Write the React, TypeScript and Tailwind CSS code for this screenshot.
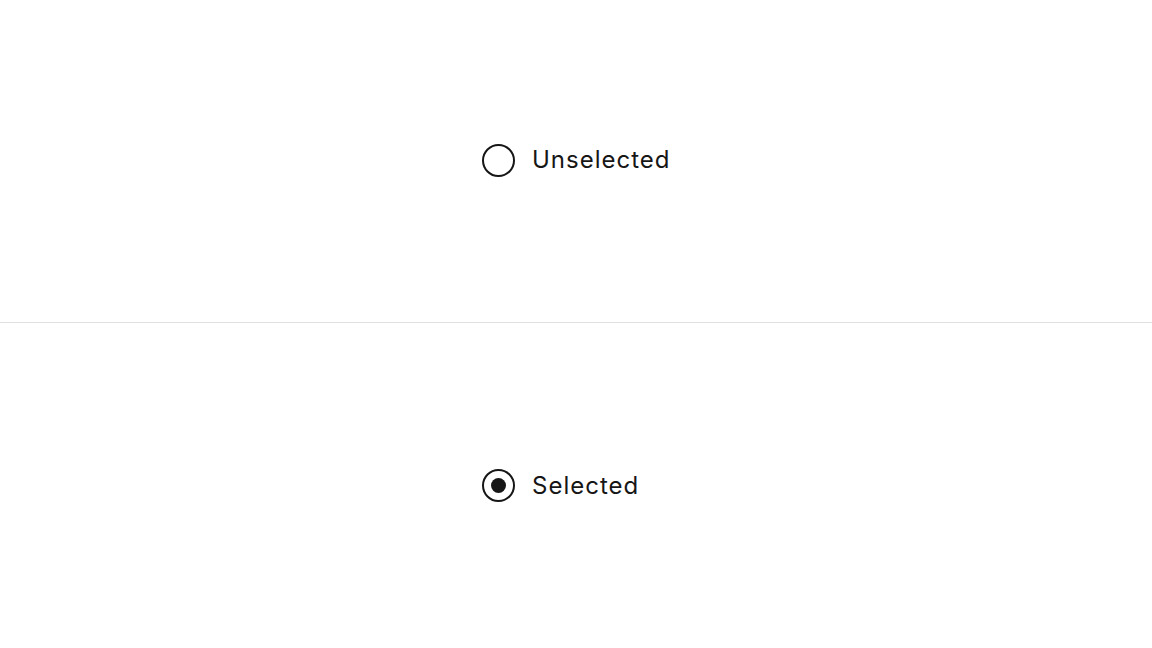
import React from "react";

function Radio({ checked, label }: { checked: boolean; label: string }) {
  return (
    <label className="flex items-center gap-[17px] cursor-pointer">
      <span className="flex h-[33px] w-[33px] shrink-0 items-center justify-center rounded-full border-[2.5px] border-[#161616]">
        {checked && <span className="h-[15px] w-[15px] rounded-full bg-[#161616]" />}
      </span>
      <span className="text-[24px] leading-none tracking-[1px] text-[#161616]">{label}</span>
    </label>
  );
}

export default function App() {
  return (
    <div
      className="flex h-[648px] w-full flex-col bg-white"
      style={{ fontFamily: "Inter, 'Noto Sans', sans-serif" }}
    >
      <div className="flex h-[322px] items-center justify-center pb-[2px]">
        <div className="w-[188px]">
          <Radio checked={false} label="Unselected" />
        </div>
      </div>
      <div className="h-px bg-[#e0e0e0]" />
      <div className="flex flex-1 items-center justify-center">
        <div className="w-[188px]">
          <Radio checked label="Selected" />
        </div>
      </div>
    </div>
  );
}
